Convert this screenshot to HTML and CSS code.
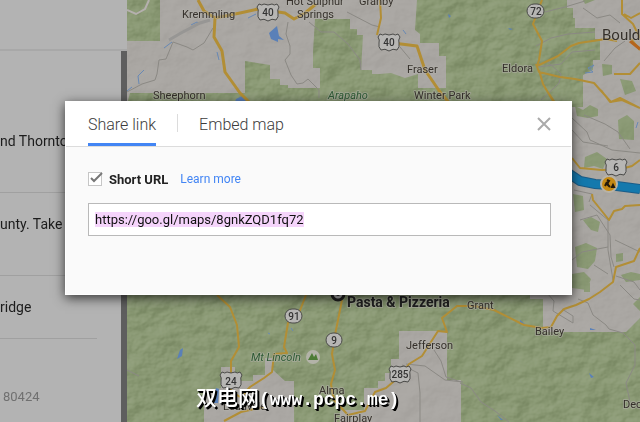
FILE: index.html
```html
<!DOCTYPE html>
<html lang="en">
<head>
<meta charset="utf-8">
<title>Share map</title>
<link rel="stylesheet" href="styles.css">
</head>
<body>
<div class="app">
  <aside class="directions">
    <div class="directions-head"></div>
    <div class="directions-list">
      <p class="step step-first">nd Thornton</p>
      <p class="step">unty. Take</p>
      <p class="step step-last">ridge</p>
      <p class="address">80424</p>
    </div>
  </aside>
  <main class="map">
    <svg class="map-canvas" viewBox="127 0 513 422" preserveAspectRatio="xMinYMin slice" role="img" aria-label="Map of Colorado">
      <defs>
        <filter id="relief" x="0" y="0" width="100%" height="100%" color-interpolation-filters="sRGB">
          <feTurbulence type="fractalNoise" baseFrequency="0.04 0.05" numOctaves="4" seed="8" result="n"/>
          <feDiffuseLighting in="n" surfaceScale="5" lighting-color="#ffffff">
            <feDistantLight azimuth="225" elevation="30"/>
          </feDiffuseLighting>
        </filter>
        <g id="us">
          <path d="M-9-8Q-6-6-4-8Q0-6 4-8Q6-6 9-8L11-5Q9-2 10 1Q11 5 8 8Q4 6 0 9Q-4 6-8 8Q-11 5-10 1Q-9-2-11-5Z"/>
        </g>
        <clipPath id="wild">
          <path id="forest" d="M127 0H160V41H127ZM130 93H245V61L270 65V79H280V85H288V88H320V68H313V52L315 19H350V29H357V35H363L361 70H372V74H380L391 73L405 78L418 74V88H446V56H439V43H420V34L415 30L417 0H567V8H573V18H575V28H595V39H600V60H593V70L583 75V107H572V295H530V299H543V332H626L640 318V422H461V380H447V331H399V359H391V373H385V381H378V388H364V410H340V422H294V381H285L273 370V358H265V375H253V381H235V367H221V388L204 392V422H127V104Z"/>
        </clipPath>
      </defs>
      <rect class="land" x="127" width="513" height="422"/>
      <use href="#forest" class="forest"/>
      <rect class="land" x="572" y="107" width="68" height="192"/>
      <path class="forest" d="M575 106L583 110L590 105L598 109V116L588 118L577 116ZM618 120L627 115L634 121V140L619 139ZM585 157L597 152L607 159L603 169L594 166L584 168ZM573 194L583 196L584 210L575 212ZM583 220L591 217L600 222L598 232L591 230L586 224ZM575 247L586 243L597 248L595 261L588 269L577 267ZM616 254L623 253V261L616 262ZM572 274L584 272L591 279L587 290L572 288ZM621 275L631 272L640 274V280L626 282ZM584 285L590 283V292H584ZM602 64L612 65V74L603 76ZM620 79L632 81L636 91L625 95ZM585 4L595 0H583ZM633 304L640 297V311Z"/>
      <rect class="relief relief-land" x="127" width="513" height="422"/>
      <g class="relief-forest" clip-path="url(#wild)"><rect class="relief" x="127" width="513" height="422"/></g>

      <g class="rivers">
        <path d="M269 33L277 26L279 36L284 40L278 39V42L271 39ZM236 99L242 96L248 102H235ZM216 388L219 389L218 403H213ZM180 350L183 348L182 356L177 359ZM448 14L451 16L449 18ZM508 28L513 29L510 30ZM520 320L525 324L520 323ZM590 328L596 330H590ZM589 373L594 377L591 378ZM497 415L503 420L501 420Z"/>
        <path d="M164 48L172 42M191 25L197 22L200 24M217 52L219 60M139 84L138 76L144 70M127 91L132 87M248 18L256 14M403 30L406 34M585 73L593 72L588 68L594 65L590 70M636 128L638 122M268 333L270 334M291 328L293 331"/>
      </g>
      <path class="valley" d="M169 40L181 33L200 23L210 20"/>
      <g class="minor">
        <path d="M127 92L142 84L155 80L157 74L159 60L166 59L173 42L187 47L193 50L204 43L213 28M288 22L286 34L290 46V54L285 60L291 75L297 84L303 83L308 79L319 90V98M309 22L321 32L334 32L348 44L360 60L361 70M347 12L372 25L380 27M400 47L410 59M536 46L551 38L568 34L595 32M538 67L561 64L572 52L595 50M545 12L565 7L585 1M583 8L597 18L610 15L620 23M604 61L615 48L625 41M548 62L561 74L559 83L553 89L541 100M572 118L587 132L590 140L612 150L640 153M584 115L605 124L618 132L630 149M572 130L583 142L608 146M574 190L592 194L589 202M580 220L597 215L610 235L611 257L614 267M590 205L608 220V250L613 280M572 260L582 252L608 247M615 240L640 252M594 265L608 274M616 276L634 282L640 290M547 293L554 301L553 311L573 323L573 316L562 309M578 299L588 303L593 315L606 325L609 329L623 333L635 345L635 365L626 383L630 402M460 383L471 388L481 402L495 411L509 422M434 350L441 361L446 377L461 382M402 365L418 373L420 393V422M127 370L139 376M406 364L425 366L445 380L463 382M620 285L634 299L640 300"/>
      </g>
      <g class="roads">
        <path class="road wide" d="M198 0L204 11L215 18L214 37L222 51L225 72L240 93L251 104M215 18L240 13L258 9L285 13L294 19L305 13L316 4M393 43L417 46L425 70L440 92L450 104"/>
        <path class="road" d="M380 0L381 18L377 35M542 0L533 24L542 41L539 60L537 66L558 56L571 46L579 43L606 39L617 41M536 64L539 72L560 77L575 79L594 83L611 102L620 98L640 108M539 70L543 84L553 101M622 0V14L633 24L640 38M624 14L631 18L640 13M631 39L640 50M614 74L630 74L640 63M601 90L610 102L622 100L640 108M545 88L556 104M572 158L580 168L602 170L621 169L632 166L640 160M592 194L593 200L609 220L614 211L622 209L625 206L640 205M217 295L230 307L237 325L239 347L231 361L231 373L231 391L240 397M306 295L299 313L288 323L284 347L287 353L274 354L272 372L264 378L250 387L241 397M342 300L335 335L332 354L335 370L331 384L334 400L348 415L365 411L375 392L386 388L399 377L409 364L422 356L438 331L447 332L442 318L457 306L474 306L494 310L524 325L542 328L551 327L557 316L564 309L576 305L589 299L600 292L613 282L616 267L634 261L640 248M224 421L241 412L264 407"/>
        <path class="red-road" d="M630 41L640 49"/>
        <path class="trail" d="M127 10L136 14L145 9L149 0"/>
      </g>
      <path class="route-edge" d="M568 173L580 181L595 184L609 185L640 189"/>
      <path class="route" d="M568 173L580 181L595 184L609 185L640 189"/>
      <g class="roadworks" transform="translate(609 184)">
        <circle r="8"/><path d="M-2-4L0-3L-2 0L1 3M-2-2L-4 2M3 3L5 3L4 1Z"/>
      </g>
      <g class="peak" transform="translate(313 357)"><circle r="7"/><path d="M-5 3L-1-4L1 0L3-3L5 3Z"/></g>
      <g class="pin" transform="translate(338 294)"><circle r="6"/><circle class="pin-dot" r="2"/></g>

      <g class="shields">
        <use href="#us" x="268" y="12"/><use href="#us" x="389" y="42"/>
        <use href="#us" x="616" y="167"/><use href="#us" x="231" y="380"/><use href="#us" x="400" y="374"/>
        <rect x="527" y="4" width="17" height="14" rx="7"/>
        <rect x="285" y="309" width="17" height="14" rx="7"/>
        <rect x="326" y="333" width="16" height="14" rx="7"/>
      </g>
      <g class="shield-text">
        <text x="268" y="16">40</text><text x="389" y="46">40</text><text x="536" y="15">72</text>
        <text x="616" y="171">6</text><text x="231" y="385">24</text><text x="294" y="320">91</text>
        <text x="334" y="344">9</text><text x="400" y="378">285</text>
      </g>
      <g class="places">
        <text x="182" y="18">Kremmling</text>
        <text x="286" y="5">Hot Sulphur</text>
        <text x="297" y="18">Springs</text>
        <text x="359" y="5">Granby</text>
        <text x="407" y="73">Fraser</text>
        <text x="502" y="72">Eldora</text>
        <text x="153" y="99">Sheephorn</text>
        <text x="414" y="99">Winter Park</text>
        <text x="467" y="309">Grant</text>
        <text x="535" y="335">Bailey</text>
        <text x="406" y="349">Jefferson</text>
        <text x="319" y="394">Alma</text>
        <text x="334" y="422">Fairplay</text>
        <text x="223" y="410">Leadville</text>
        <text x="623" y="408">Deckers</text>
        <text class="city" x="602" y="40">Boulder</text>
        <text class="park" x="328" y="99">Arapaho</text>
        <text class="park" x="251" y="361">Mt Lincoln</text>
        <text class="stop" x="347" y="307">Pasta &amp; Pizzeria</text>
      </g>
    </svg>
  </main>
</div>

<div class="watermark">双电网<span class="watermark-site">(www.pcpc.me)</span></div>

<div class="overlay">
  <section class="dialog" role="dialog" aria-label="Share">
    <header class="dialog-head">
      <nav class="tabs">
        <button class="tab tab-active" type="button">Share link</button>
        <span class="tab-divider"></span>
        <button class="tab" type="button">Embed map</button>
      </nav>
      <button class="close" type="button" aria-label="Close">
        <svg viewBox="0 0 14 14" width="14" height="14"><path d="M1 1L13 13M13 1L1 13"/></svg>
      </button>
    </header>
    <div class="dialog-body">
      <div class="options">
        <span class="check">
          <input class="check-box" id="short" type="checkbox" checked>
          <svg class="check-mark" viewBox="0 0 16 14" width="16" height="14"><path d="M3 6L6 9L14 1"/></svg>
        </span>
        <label class="check-label" for="short">Short URL</label>
        <a class="more" href="#">Learn more</a>
      </div>
      <input class="url" id="url" type="text" aria-label="Short URL address" value="https://goo.gl/maps/8gnkZQD1fq72" readonly>
    </div>
  </section>
</div>
<script src="script.js"></script>
</body>
</html>
```
FILE: styles.css
```css
* { box-sizing: border-box; }

body {
  margin: 0;
  font-family: Roboto, "Liberation Sans", sans-serif;
  overflow: hidden;
}

.app {
  display: grid;
  grid-template-columns: 127px 1fr;
  height: 100vh;
  background: #aaa7a3;
}

.directions {
  display: flex;
  flex-direction: column;
  background: #b3b3b3;
  color: #1c1c1c;
  font-size: 14px;
  line-height: 20px;
  overflow: hidden;
}

.directions-head {
  height: 51px;
  flex: none;
  border-bottom: 2px solid #a8a8a8;
}

.directions-list {
  flex: 1;
  border-right: 6px solid #5e5e5e;
}

.step {
  margin: 0 24px 0 0;
  padding: 21px 0 41px;
  border-bottom: 1px solid #a0a0a0;
  white-space: nowrap;
}

.step-first { padding-top: 80px; }
.step-last { padding-bottom: 21px; }

.address {
  margin: 0;
  padding: 48px 3px;
  color: #707070;
  font-size: 13px;
}

.map { overflow: hidden; }

.map-canvas {
  display: block;
  width: 100%;
  height: 100%;
}

.land { fill: #aaa7a3; }
.forest { fill: #8a9974; }
.relief { filter: url(#relief); }
.relief-land { opacity: 0.08; mix-blend-mode: soft-light; }
.relief-forest { opacity: 0.16; mix-blend-mode: soft-light; }

.rivers { fill: #5a80b8; }
.rivers path + path { fill: none; stroke: #6788b5; stroke-width: 1; }
.valley { fill: none; stroke: #979694; stroke-width: 3; }
.minor { fill: none; stroke: #8b8984; stroke-width: 1; stroke-linejoin: round; }
.road { fill: none; stroke: #b28e35; stroke-width: 2; stroke-linejoin: round; }
.wide { stroke-width: 3; }
.red-road { fill: none; stroke: #b5651d; stroke-width: 3; }
.trail { fill: none; stroke: #b5b0ae; stroke-width: 2; }
.route-edge { fill: none; stroke: #1c5d88; stroke-width: 10; }
.route { fill: none; stroke: #1479ad; stroke-width: 8; }
.roadworks circle { fill: #c58a13; stroke: #b9b3a6; stroke-width: 2; }
.roadworks path { fill: #22190a; stroke: #22190a; stroke-width: 2; }
.peak circle { fill: #b3b3a8; }
.peak path { fill: #4d7b36; }
.pin circle { fill: #b5b5b5; stroke: #202020; stroke-width: 3; }
.pin .pin-dot { fill: #202020; stroke: none; }
.shields { fill: #b7b6b4; stroke: #4b4b49; stroke-width: 1; }
.shield-text { fill: #333333; font-size: 10px; font-weight: 500; text-anchor: middle; }

.places {
  fill: #35302b;
  stroke: #b4b1ab;
  stroke-opacity: 0.5;
  stroke-width: 2;
  stroke-linejoin: round;
  paint-order: stroke;
  font-size: 11px;
}

.places .city { font-size: 15px; }
.places .park { fill: #2e5b35; font-style: italic; }
.places .stop { fill: #202020; font-size: 14px; font-weight: 700; }

.watermark {
  position: absolute;
  left: 196px;
  top: 382px;
  color: #ffffff;
  font: 500 21px/28px "Noto Sans CJK SC", sans-serif;
  text-shadow: 1px 1px #000000, 2px 2px #000000;
  white-space: nowrap;
}

.watermark-site {
  font: 700 18px/28px "Liberation Mono", monospace;
}

.overlay {
  position: fixed;
  inset: 0;
  display: flex;
  align-items: center;
  justify-content: center;
  padding: 0 3px 26px 0;
}

.dialog {
  width: 100%;
  max-width: 507px;
  background: #fafafa;
  border: 1px solid #ffffff;
  box-shadow: 0 3px 11px rgba(0, 0, 0, 0.7);
}

.dialog-head {
  display: flex;
  align-items: center;
  justify-content: space-between;
  height: 45px;
  padding: 0 20px 0 22px;
  background: #ffffff;
  border-bottom: 1px solid #dcdcdc;
}

.tabs {
  display: flex;
  align-items: flex-start;
  gap: 21px;
  height: 100%;
}

.tab {
  height: 44px;
  padding: 4px 0 0;
  border: 0;
  border-bottom: 3px solid transparent;
  background: none;
  color: #3c3c3c;
  font: 300 16px/20px Roboto, "Liberation Sans", sans-serif;
}

.tab-active { border-bottom-color: #4285f4; }

.tab-divider {
  width: 1px;
  height: 18px;
  margin-top: 12px;
  background: #dcdcdc;
}

.close {
  display: flex;
  padding: 0;
  border: 0;
  background: none;
}

.close path { stroke: #aaaaaa; stroke-width: 2; }

.dialog-body { padding: 22px 20px 58px 22px; }

.options {
  display: flex;
  align-items: center;
  height: 20px;
  margin-bottom: 14px;
  font-size: 13px;
}

.check {
  position: relative;
  display: flex;
  margin-right: 7px;
}

.check-box {
  appearance: none;
  width: 14px;
  height: 14px;
  margin: 0;
  border: 1px solid #c6c6c6;
  background: #ffffff;
}

.check-mark {
  position: absolute;
  left: 0;
  top: 0;
  fill: none;
  stroke: #777777;
  stroke-width: 2;
  pointer-events: none;
}

.check-label { color: #222222; font-weight: 700; }

.more {
  margin-left: 12px;
  color: #4285f4;
  font-size: 12px;
  text-decoration: none;
}

.url {
  display: block;
  width: 100%;
  height: 33px;
  padding: 0 6px;
  border: 1px solid #b9b9b9;
  border-radius: 0;
  outline: 0;
  background: #ffffff;
  color: #111111;
  font: 13px/16px Roboto, "Liberation Sans", sans-serif;
}

.url::selection {
  background: rgba(245, 211, 251, 0.99);
  color: #111111;
}
```
FILE: script.js
```js
const url = document.getElementById("url");
url.focus();
url.select();
```
